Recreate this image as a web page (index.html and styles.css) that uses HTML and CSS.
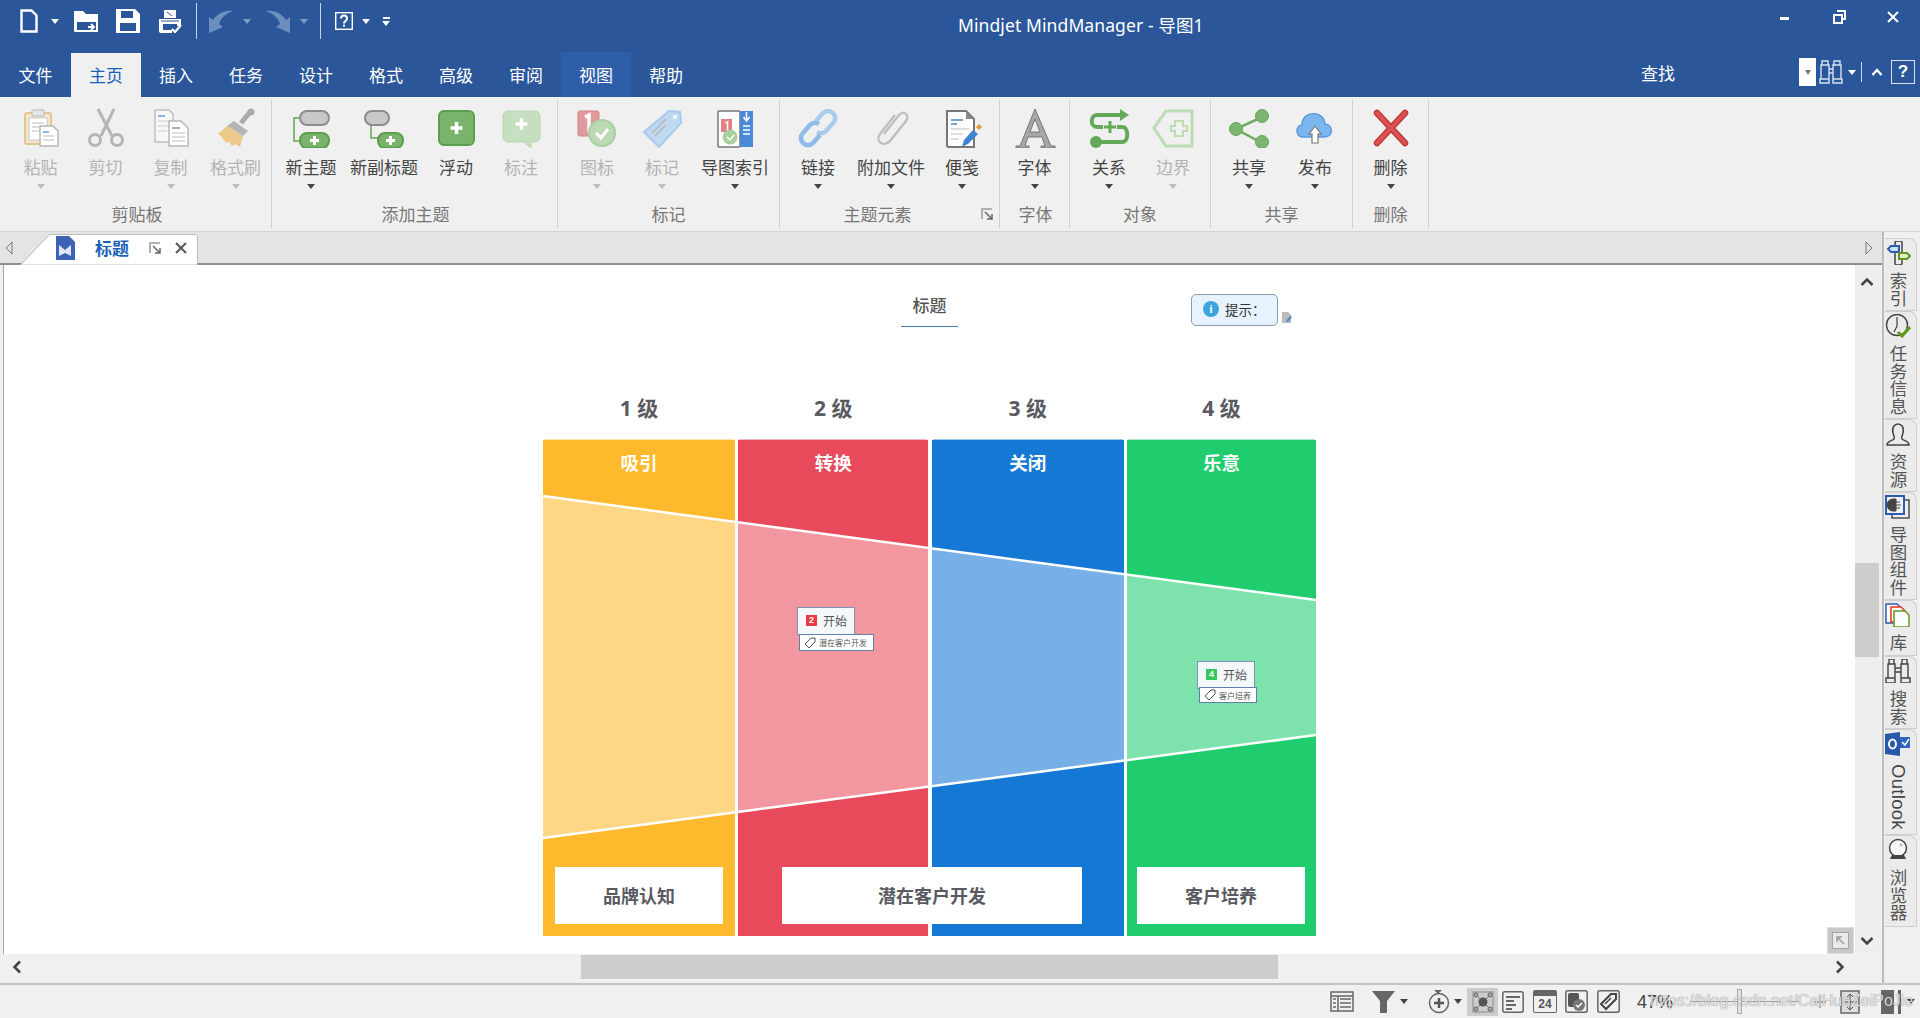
FILE: index.html
```html
<!DOCTYPE html>
<html lang="zh">
<head>
<meta charset="utf-8">
<title>Mindjet MindManager - 导图1</title>
<link rel="stylesheet" href="styles.css">
</head>
<body>
<div class="app">
  <header class="titlebar">
    <div class="qat">
      <svg class="qi w18 m20" viewBox="0 0 18 24"><path d="M1.5 1.5h10l5 5v16h-15z" fill="none" stroke="#fff" stroke-width="2.4"/></svg>
      <i class="caret m13"></i>
      <svg class="qi m15" viewBox="0 0 24 24"><path d="M0 2h9l3 3h12v18H1a1 1 0 0 1-1-1z" fill="#fff"/><path d="M3 13h19v8H3z" fill="#2b579a"/><path d="M14 18h6m-3-3 3 3-3 3" fill="none" stroke="#fff" stroke-width="2"/></svg>
      <svg class="qi m18" viewBox="0 0 24 24"><path d="M0 0h19l5 5v19H0z" fill="#fff"/><path d="M5 2h12v7H5zM4 14h16v8H4z" fill="#2b579a"/></svg>
      <svg class="qi m18" viewBox="0 0 24 24"><path d="M6 1h12v8H6z" fill="#fff"/><path d="M9 3l5 4" stroke="#2b579a"/><path d="M1 10h22v7h-4v-2H5v6h9v3H3a2 2 0 0 1-2-2z" fill="#fff"/><path d="M3 12h18" stroke="#2b579a"/><path d="M14 20l3 3 6-7" fill="none" stroke="#fff" stroke-width="2.2"/></svg>
      <i class="qsep m14"></i>
      <svg class="qi m12" viewBox="0 0 24 24"><path d="M0 24V8l4 3C8 5 15 1 24 2 16 5 12 9 10 15l4 3z" fill="#6c8fbf"/></svg>
      <i class="caret dim m10"></i>
      <svg class="qi m15" viewBox="0 0 24 24"><path d="M24 24V8l-4 3C16 5 9 1 0 2c8 3 12 7 14 13l-4 3z" fill="#6c8fbf"/></svg>
      <i class="caret dim m10"></i>
      <i class="qsep m12"></i>
      <svg class="qi w18 m14" viewBox="0 0 18 18"><rect x=".7" y=".7" width="16.6" height="16.6" fill="none" stroke="#fff" stroke-width="1.4"/><path d="M6 6.5c0-4 6-4 6 0 0 2.500-3 2.500-3 5" fill="none" stroke="#fff" stroke-width="2"/><rect x="8" y="12.600" width="2" height="2" fill="#fff"/></svg>
      <i class="caret m9"></i>
      <span class="customize m12"><i class="dash"></i><i class="caret"></i></span>
    </div>
    <div class="title">Mindjet MindManager - 导图1</div>
    <div class="winctl">
      <span class="wc"><svg width="10" height="10" viewBox="0 0 10 10"><rect y="5" width="9" height="3" fill="#fff"/></svg></span>
      <span class="wc"><svg width="13" height="14" viewBox="0 0 13 14"><path d="M4 1h8v8H9M1 5h8v8H1z" fill="none" stroke="#fff" stroke-width="2"/></svg></span>
      <span class="wc"><svg width="12" height="12" viewBox="0 0 12 12"><path d="M1 1l10 10M11 1 1 11" stroke="#fff" stroke-width="2"/></svg></span>
    </div>
  </header>

  <nav class="menubar">
    <a class="tab">文件</a>
    <a class="tab active">主页</a>
    <a class="tab">插入</a>
    <a class="tab">任务</a>
    <a class="tab">设计</a>
    <a class="tab">格式</a>
    <a class="tab">高级</a>
    <a class="tab">审阅</a>
    <a class="tab hover">视图</a>
    <a class="tab">帮助</a>
    <div class="find">
      <span class="find-label">查找</span>
      <span class="find-box"><i class="caret gray"></i></span>
      <svg width="24" height="24" viewBox="0 0 24 24"><path d="M3 1h6v4H3zM15 1h6v4h-6zM2 5h8v14H2zM14 5h8v14h-8zM10 9h4v4h-4zM1 19h9v4H1zM14 19h9v4h-9z" fill="none" stroke="#d8e2f0" stroke-width="1.400"/></svg>
      <i class="caret m5"></i>
      <i class="find-sep"></i>
      <svg class="m9" width="12" height="10" viewBox="0 0 12 10"><path d="M1.500 8 6 3l4.500 5" fill="none" stroke="#fff" stroke-width="2.400"/></svg>
      <span class="helpbox">?</span>
    </div>
  </nav>

  <section class="ribbon">
    <div class="group g-clip">
      <div class="items">
        <div class="item w65 off"><svg class="ic" viewBox="0 0 44 40"><rect x="6" y="5" width="26" height="31" rx="2" fill="#f3e6d0" stroke="#e2c795" stroke-width="2"/><rect x="13" y="2" width="12" height="6" rx="1" fill="#e6e6e6" stroke="#b8b8b8"/><rect x="10" y="10" width="18" height="22" fill="#fff" stroke="#c9c9c9"/><path d="M13 15h12M13 19h8M13 23h8" stroke="#bbb"/><path d="M21 18h13l5 5v15H21z" fill="#fff" stroke="#b8b8b8" stroke-width="1.500"/><path d="M24 24h6" stroke="#8db4e2" stroke-width="2"/><path d="M24 28h11M24 32h11" stroke="#bbb"/></svg><span class="lb">粘贴</span><i class="caret off"></i></div>
        <div class="item w65 off"><svg class="ic" viewBox="0 0 44 40"><path d="M14 1l14 27M30 1 17 28" stroke="#b5b5b5" stroke-width="3" fill="none"/><circle cx="11" cy="32" r="5.500" fill="none" stroke="#b5b5b5" stroke-width="3"/><circle cx="33" cy="32" r="5.500" fill="none" stroke="#b5b5b5" stroke-width="3"/></svg><span class="lb">剪切</span></div>
        <div class="item w65 off"><svg class="ic" viewBox="0 0 44 40"><path d="M6 2h14l4 4v28H6z" fill="#f7f7f7" stroke="#c0c0c0" stroke-width="1.500"/><path d="M9 8h7" stroke="#8db4e2" stroke-width="2"/><path d="M9 13h12M9 18h12M9 23h9" stroke="#ccc"/><path d="M20 13h12l7 7v18H20z" fill="#fff" stroke="#b8b8b8" stroke-width="1.500"/><path d="M23 20h8" stroke="#8db4e2" stroke-width="2"/><path d="M23 25h13M23 29h13M23 33h13" stroke="#bbb"/></svg><span class="lb">复制</span><i class="caret off"></i></div>
        <div class="item w65 off"><svg class="ic" viewBox="0 0 44 40"><path d="M27 15 36 4" stroke="#aaa" stroke-width="5"/><circle cx="37" cy="4" r="3.500" fill="#aaa"/><path d="M20 13l14 10-5 5-16-10z" fill="#b5b5b5"/><path d="M13 18l16 10-3 11-5-3-3 2-3-4-3 1-5-7-3-2z" fill="#ecc98b"/></svg><span class="lb">格式刷</span><i class="caret off"></i></div>
      </div>
      <div class="glabel">剪贴板</div>
    </div>
    <div class="group g-add">
      <div class="items">
        <div class="item w64"><svg class="ic" viewBox="0 0 44 40"><path d="M11 10H5v23h6" fill="none" stroke="#63a557" stroke-width="1.500"/><rect x="11" y="3" width="29" height="14" rx="7" fill="#c8c8c8" stroke="#8d8d8d" stroke-width="2"/><rect x="11" y="25" width="29" height="15" rx="7" fill="#79b36c" stroke="#5c9f4f" stroke-width="2"/><path d="M25.500 28v9M21 32.500h9" stroke="#fff" stroke-width="3"/></svg><span class="lb">新主题</span><i class="caret"></i></div>
        <div class="item w82"><svg class="ic" viewBox="0 0 44 40"><path d="M9 14v16h7" fill="none" stroke="#63a557" stroke-width="1.500"/><rect x="3" y="3" width="24" height="14" rx="7" fill="#c8c8c8" stroke="#8d8d8d" stroke-width="2"/><rect x="16" y="25" width="25" height="15" rx="7" fill="#79b36c" stroke="#5c9f4f" stroke-width="2"/><path d="M28.500 28v9M24 32.500h9" stroke="#fff" stroke-width="3"/></svg><span class="lb">新副标题</span></div>
        <div class="item w62"><svg class="ic" viewBox="0 0 44 40"><rect x="5" y="3" width="35" height="34" rx="5" fill="#79b36c" stroke="#5c9f4f" stroke-width="2"/><path d="M22.500 14v12M16.500 20h12" stroke="#fff" stroke-width="3.500"/></svg><span class="lb">浮动</span></div>
        <div class="item w68 off"><svg class="ic" viewBox="0 0 44 40"><path d="M9 3h27a5 5 0 0 1 5 5v21a5 5 0 0 1-5 5h-4v6l-7-6H9a5 5 0 0 1-5-5V8a5 5 0 0 1 5-5z" fill="#c6dfc0" stroke="#b7d6b0"/><path d="M22.500 10v12M16.500 16h12" stroke="#fff" stroke-width="3.500"/></svg><span class="lb">标注</span></div>
      </div>
      <div class="glabel">添加主题</div>
    </div>
    <div class="group g-mark">
      <div class="items">
        <div class="item w64 off"><svg class="ic" viewBox="0 0 44 40"><rect x="3" y="3" width="21" height="25" rx="2" fill="#e19a9c" stroke="#d58587"/><path d="M10 9l4-2v17" stroke="#fff" stroke-width="3.500" fill="none"/><circle cx="27" cy="25" r="13" fill="#bcd9b5" stroke="#a9cfa1" stroke-width="2"/><path d="M21 25l5 5 7-9" fill="none" stroke="#fff" stroke-width="3"/></svg><span class="lb">图标</span><i class="caret off"></i></div>
        <div class="item w66 off"><svg class="ic" viewBox="0 0 44 40"><path d="M29 3l11 1 1 11-22 24L4 24z" fill="#c0d9f2" stroke="#a8caec" stroke-width="2"/><circle cx="35" cy="9" r="2" fill="#fff"/><path d="M12 25l14-14M15 28l11-11" stroke="#b7b7b7" stroke-width="1.500"/></svg><span class="lb">标记</span><i class="caret off"></i></div>
        <div class="item w80"><svg class="ic" viewBox="0 0 44 40"><rect x="5" y="3" width="22" height="36" rx="1" fill="#fff" stroke="#777" stroke-width="1.500"/><rect x="27" y="3" width="13" height="36" fill="#4a8ad4"/><rect x="8" y="11" width="11" height="13" fill="#e08082"/><path d="M12.500 15l2-1v8" stroke="#fff" stroke-width="1.600" fill="none"/><circle cx="17" cy="29" r="7.500" fill="#a9cf9f"/><path d="M14 29l3 3 4-5" fill="none" stroke="#fff" stroke-width="1.500"/><path d="M33.500 4v8m-3-3 3 4 3-4M30 18h7M30 22h7M30 26h7" stroke="#fff" stroke-width="1.500" fill="none"/></svg><span class="lb">导图索引</span><i class="caret"></i></div>
      </div>
      <div class="glabel">标记</div>
    </div>
    <div class="group g-elem">
      <div class="items">
        <div class="item w64"><svg class="ic" viewBox="0 0 44 40"><path d="M20 13l7-8a7 7 0 0 1 10 10l-7 8a7 7 0 0 1-9 1" fill="none" stroke="#a9ccee" stroke-width="4.500"/><path d="M24 27l-7 8A7 7 0 0 1 7 25l7-8a7 7 0 0 1 9-1" fill="none" stroke="#8fbbe8" stroke-width="4.500"/></svg><span class="lb">链接</span><i class="caret"></i></div>
        <div class="item w82"><svg class="ic" viewBox="0 0 44 40"><path d="M15 26 30 7c5-5 11 0 7 6L21 33c-7 7-15 0-10-7L26 7" fill="none" stroke="#c0c0c0" stroke-width="2.500"/></svg><span class="lb">附加文件</span><i class="caret"></i></div>
        <div class="item w60"><svg class="ic" viewBox="0 0 44 40"><path d="M7 3h19l8 8v28H9a2 2 0 0 1-2-2z" fill="#fff" stroke="#777" stroke-width="2"/><path d="M26 3v8h8z" fill="#888"/><path d="M11 12h12" stroke="#4a8ad4" stroke-width="1.500"/><path d="M11 16h6" stroke="#4a8ad4" stroke-width="1.500"/><path d="M11 21h18M11 26h12M11 31h8" stroke="#bbb" stroke-width="1.200"/><path d="M22 39l2-7 9-10 5 4-10 10z" fill="#3f83d1"/><path d="M36 19l3-3 3 3-3 3z" fill="#e29a3c"/></svg><span class="lb">便笺</span><i class="caret"></i></div>
      </div>
      <div class="glabel glabel-launch">主题元素<svg class="launch" width="12" height="12" viewBox="0 0 12 12"><path d="M1 11V1h10" fill="none" stroke="#999" stroke-width="1.500"/><path d="M4 4l7 7M11 6v5H6" fill="none" stroke="#666" stroke-width="1.500"/></svg></div>
    </div>
    <div class="group g-font">
      <div class="items">
        <div class="item wfull"><svg class="ic" viewBox="0 0 44 40"><path d="M22 1 38 38h4v2H28v-2h4l-3-9H15l-3 9h4v2H3v-2h4z" fill="#a7a7a7" stroke="#777"/><path d="M22 11l-5 13h10z" fill="#f0f0f0" stroke="#777"/></svg><span class="lb">字体</span><i class="caret"></i></div>
      </div>
      <div class="glabel">字体</div>
    </div>
    <div class="group g-obj">
      <div class="items">
        <div class="item w64"><svg class="ic" viewBox="0 0 44 40"><path d="M34 7H10c-7 0-7 12 0 12h25c7 0 7 15 0 15H10" fill="none" stroke="#66a859" stroke-width="4"/><path d="M33 1l9 6-9 6z" fill="#66a859"/><circle cx="9" cy="34" r="6" fill="#66a859"/><rect x="16" y="11" width="14" height="16" rx="2" fill="#f0f0f0"/><path d="M23 13v12M17 19h12" stroke="#66a859" stroke-width="3"/></svg><span class="lb">关系</span><i class="caret"></i></div>
        <div class="item w64 off"><svg class="ic" viewBox="0 0 44 40"><path d="M15 3h26v35H15L3 20z" fill="#f0f0f0" stroke="#bcdcb4" stroke-width="3"/><path d="M24 14h8v5h4v5h-4v5h-8v-5h-4v-5h4z" transform="translate(0 -1)" fill="none" stroke="#bcdcb4" stroke-width="2"/></svg><span class="lb">边界</span><i class="caret off"></i></div>
      </div>
      <div class="glabel">对象</div>
    </div>
    <div class="group g-share">
      <div class="items">
        <div class="item w66"><svg class="ic" viewBox="0 0 44 40"><path d="M35 9 9 21l26 14" fill="none" stroke="#6dab61" stroke-width="2.500"/><circle cx="35" cy="8" r="6.500" fill="#7cb570" stroke="#66a859"/><circle cx="9" cy="21" r="6.500" fill="#7cb570" stroke="#66a859"/><circle cx="35" cy="34" r="6.500" fill="#7cb570" stroke="#66a859"/></svg><span class="lb">共享</span><i class="caret"></i></div>
        <div class="item w66"><svg class="ic" viewBox="0 0 44 40"><path d="M11 29c-9 0-9-11-2-12C9 2 31 2 32 16c9 1 8 13 0 13z" fill="#7cb6ee" stroke="#5b9bdd" stroke-width="1.500"/><path d="M22 18l6 8h-3v9h-6v-9h-3z" fill="#fff" stroke="#777" stroke-width="1.200"/></svg><span class="lb">发布</span><i class="caret"></i></div>
      </div>
      <div class="glabel">共享</div>
    </div>
    <div class="group g-del">
      <div class="items">
        <div class="item wfull"><svg class="ic" viewBox="0 0 44 40"><path d="M8 5l28 30M36 5 8 35" stroke="#bf3535" stroke-width="6.500" stroke-linecap="round"/><path d="M8 5l28 30M36 5 8 35" stroke="#da5252" stroke-width="4" stroke-linecap="round"/></svg><span class="lb">删除</span><i class="caret"></i></div>
      </div>
      <div class="glabel">删除</div>
    </div>
  </section>

  <div class="workspace">
    <main class="main">
      <div class="docstrip">
        <svg class="strip-arrow" width="8" height="14" viewBox="0 0 8 14"><path d="M7 1 1 7l6 6z" fill="#e4e4e4" stroke="#777"/></svg>
        <div class="doctab">
          <svg class="doctab-bg" width="178" height="31" viewBox="0 0 178 31"><path d="M.5 31 29.500.5h146l2 2V31z" fill="#fff" stroke="#bdbdbd"/></svg>
          <svg class="docicon" width="20" height="24" viewBox="0 0 20 24"><path d="M0 0h13l6 6v18H0z" fill="#3c62b5"/><path d="M3 20V9l6 5 6-5v11l-6-3z" fill="#fff" opacity=".85"/></svg>
          <span class="doctab-name">标题</span>
          <svg class="popout" width="12" height="12" viewBox="0 0 12 12"><path d="M1 11V1h10" fill="none" stroke="#999" stroke-width="1.500"/><path d="M4 4l7 7M11 6v5H6" fill="none" stroke="#666" stroke-width="1.500"/></svg>
          <svg class="tabclose" width="12" height="12" viewBox="0 0 12 12"><path d="M1 1l10 10M11 1 1 11" stroke="#555" stroke-width="2"/></svg>
        </div>
        <svg class="strip-arrow right" width="8" height="14" viewBox="0 0 8 14"><path d="M1 1l6 6-6 6z" fill="#e4e4e4" stroke="#777"/></svg>
      </div>
      <div class="viewport">
        <div class="canvas">
          <div class="root-topic">标题</div>
          <div class="tip"><span class="tip-i">i</span>提示：</div>
          <svg class="tip-note" width="10" height="11" viewBox="0 0 10 11"><path d="M0 0h6l3 3v8H0z" fill="#bbb"/><path d="M4 9l4-5 2 1-4 5z" fill="#4a8ad4"/></svg>

          <div class="funnel">
            <div class="stage s1"><div class="level">1 级</div><div class="col">吸引</div></div>
            <div class="stage s2"><div class="level">2 级</div><div class="col">转换</div></div>
            <div class="stage s3"><div class="level">3 级</div><div class="col">关闭</div></div>
            <div class="stage s4"><div class="level">4 级</div><div class="col">乐意</div></div>
            <svg class="band" width="773" height="496" viewBox="0 0 773 496"><path d="M0 56 773 160V295L0 398z" fill="#fff" fill-opacity=".42"/><path d="M0 56 773 160M0 398 773 295" stroke="#fff" stroke-width="2.500"/></svg>
            <div class="endbox eb1">品牌认知</div>
            <div class="endbox eb2">潜在客户开发</div>
            <div class="endbox eb3">客户培养</div>
            <div class="node n1"><span class="badge red">2</span>开始</div>
            <div class="mtag t1"><svg width="12" height="12" viewBox="0 0 12 12"><path d="M7 1h4v4L5 11 1 7z" fill="none" stroke="#555"/></svg>潜在客户开发</div>
            <div class="node n2"><span class="badge green">4</span>开始</div>
            <div class="mtag t2"><svg width="12" height="12" viewBox="0 0 12 12"><path d="M7 1h4v4L5 11 1 7z" fill="none" stroke="#555"/></svg>客户培养</div>
          </div>

          <div class="fitbtn"><svg width="17" height="17" viewBox="0 0 17 17"><rect x=".5" y=".5" width="16" height="16" fill="#e9e9e9" stroke="#a5a5a5"/><path d="M12 12 5 5M5 10V5h5" fill="none" stroke="#9a9a9a" stroke-width="1.500"/></svg></div>
        </div>
        <div class="vscroll">
          <div class="vs-track"><svg width="14" height="10" viewBox="0 0 14 10"><path d="M1.500 8 7 2.500 12.500 8" fill="none" stroke="#444" stroke-width="2.500"/></svg></div>
          <div class="vs-thumb"></div>
          <div class="vs-track end"><svg width="14" height="10" viewBox="0 0 14 10"><path d="M1.500 2 7 7.500 12.500 2" fill="none" stroke="#444" stroke-width="2.500"/></svg></div>
        </div>
      </div>
      <div class="hscroll">
        <div class="hs-track"><svg width="10" height="14" viewBox="0 0 10 14"><path d="M8 1.500 2.500 7 8 12.500" fill="none" stroke="#444" stroke-width="2.500"/></svg></div>
        <div class="hs-thumb"></div>
        <div class="hs-track end"><svg width="10" height="14" viewBox="0 0 10 14"><path d="M2 1.500 7.500 7 2 12.500" fill="none" stroke="#444" stroke-width="2.500"/></svg></div>
      </div>
    </main>
    <aside class="sidebar">
      <div class="stab h73"><svg class="si" viewBox="0 0 26 24"><rect x="10" y="0" width="7" height="24" rx="2" fill="none" stroke="#444" stroke-width="1.500"/><path d="M3 8l3-3h8v6H6z" fill="#cfe0f2" stroke="#2a5db0" stroke-width="2"/><path d="M14 12h8l3 3-3 3h-8z" fill="#e3f0c8" stroke="#5e9a1e" stroke-width="2"/></svg><span class="vt">索引</span></div>
      <div class="stab h108"><svg class="si" viewBox="0 0 26 24"><circle cx="12" cy="11" r="10.500" fill="none" stroke="#444" stroke-width="1.400"/><path d="M12 3v9l-3 6" fill="none" stroke="#444" stroke-width="1.200"/><path d="M13 18l4 4 8-9" fill="none" stroke="#5e9a1e" stroke-width="3"/></svg><span class="vt">任务信息</span></div>
      <div class="stab h73"><svg class="si" viewBox="0 0 26 24"><path d="M8 11c-3-12 13-12 10 0-1 4-2 4-1 6 2 2 7 2 7 6H2c0-4 5-4 7-6 1-2 0-2-1-6z" fill="none" stroke="#444" stroke-width="1.500"/></svg><span class="vt">资源</span></div>
      <div class="stab h108"><svg class="si" viewBox="0 0 26 24"><rect x="7" y="5" width="17" height="18" fill="#eee" stroke="#444" stroke-width="1.400"/><rect x="1" y="1" width="18" height="18" fill="#f0f0f0" stroke="#2a5db0" stroke-width="2"/><path d="M11 4H8a4 4 0 0 0 0 12h3zM11 7h4M11 10h5M11 13h4" fill="#444" stroke="#444"/></svg><span class="vt">导图组件</span></div>
      <div class="stab h56"><svg class="si" viewBox="0 0 26 24"><path d="M1 1h11l4 4v15H1z" fill="#fff" stroke="#2a5db0" stroke-width="1.500"/><path d="M6 4h10l4 4v11H6z" fill="#fff" stroke="#e8341c" stroke-width="1.500"/><path d="M9 8h11l4 4v12H9z" fill="#fff" stroke="#5e9a1e" stroke-width="1.500"/></svg><span class="vt">库</span></div>
      <div class="stab h73"><svg class="si" viewBox="0 0 26 24"><path d="M4 0h5v5H4zM17 0h5v5h-5zM3 5h7v14H3zM16 5h7v14h-7zM10 9h6v4h-6zM1 19h9v5H1zM16 19h9v5h-9z" fill="none" stroke="#444" stroke-width="1.400"/></svg><span class="vt">搜索</span></div>
      <div class="stab h106"><svg class="si" viewBox="0 0 26 24"><path d="M0 2 15 0v24L0 22z" fill="#2658ad"/><rect x="15" y="5" width="10" height="11" fill="#2f66bd"/><ellipse cx="7.500" cy="12" rx="3.500" ry="4.500" fill="none" stroke="#fff" stroke-width="2"/><path d="M17 10l3 3 4-6" fill="none" stroke="#fff" stroke-width="1.500"/></svg><span class="vt latin">Outlook</span></div>
      <div class="stab h92"><svg class="si" viewBox="0 0 26 24"><circle cx="13" cy="10" r="8.500" fill="#f8f8f8" stroke="#444" stroke-width="1.500"/><circle cx="16" cy="7" r="1.500" fill="#bbb"/><path d="M7 17h12l2 4H5z" fill="#444"/></svg><span class="vt">浏览器</span></div>
    </aside>
  </div>

  <footer class="status">
    <svg class="sti m0" width="24" height="21" viewBox="0 0 24 21"><rect x="1" y="1" width="22" height="19" fill="none" stroke="#666" stroke-width="1.500"/><path d="M1 5h22M8 5v15M3 8h3M3 12h3M3 16h3M10 8h11M10 12h11M10 16h11" stroke="#666" stroke-width="1.500"/></svg>
    <svg class="sti m18" width="23" height="22" viewBox="0 0 23 22"><path d="M0 0h23l-8 10v12H8V10z" fill="#666"/></svg>
    <i class="caret m5"></i>
    <svg class="sti m20" width="22" height="24" viewBox="0 0 22 24"><circle cx="11" cy="13" r="9.500" fill="none" stroke="#666" stroke-width="1.500"/><path d="M6 0h8l-4 4z" fill="#666"/><path d="M11 8v10M6 13h10" stroke="#555" stroke-width="2.500"/></svg>
    <i class="caret m4"></i>
    <span class="st-active m5"><svg width="22" height="22" viewBox="0 0 22 22"><rect x="1" y="1" width="20" height="20" fill="none" stroke="#8a8a8a"/><path d="M4 4l14 14M18 4 4 18" stroke="#777"/><circle cx="11" cy="11" r="4.500" fill="#555"/><circle cx="4" cy="4" r="2" fill="#aaa" stroke="#666"/><circle cx="18" cy="4" r="2" fill="#aaa" stroke="#666"/><circle cx="4" cy="18" r="2" fill="#aaa" stroke="#666"/><circle cx="18" cy="18" r="2" fill="#aaa" stroke="#666"/></svg></span>
    <svg class="sti m4" width="22" height="22" viewBox="0 0 22 22"><rect x=".8" y=".8" width="20.400" height="20.400" rx="2" fill="none" stroke="#666" stroke-width="1.500"/><path d="M4 6h14M4 10h8M4 14h10M4 18h6" stroke="#666" stroke-width="1.800"/></svg>
    <span class="cal m9">24</span>
    <svg class="sti m8" width="23" height="23" viewBox="0 0 23 23"><rect x=".8" y=".8" width="21.400" height="21.400" rx="2" fill="none" stroke="#666" stroke-width="1.500"/><rect x="3" y="3" width="11" height="14" rx="2" fill="#555"/><circle cx="14" cy="15" r="6" fill="#777"/><path d="M11 15l2 2 4-4" fill="none" stroke="#fff" stroke-width="1.500"/></svg>
    <svg class="sti m9" width="23" height="23" viewBox="0 0 23 23"><rect x=".8" y=".8" width="21.400" height="21.400" rx="2" fill="none" stroke="#666" stroke-width="1.500"/><path d="M14 4h5v5L9 19l-5-5z" fill="none" stroke="#444" stroke-width="2"/><path d="M8 14l6-6" stroke="#444" stroke-width="1.500"/></svg>
    <span class="zoom m17">47%</span>
    <span class="slider m18"><i class="thumb"></i></span>
    <svg class="sti m14" width="12" height="12" viewBox="0 0 12 12"><path d="M6 0v12M0 6h12" stroke="#999" stroke-width="1.500"/></svg>
    <svg class="sti m14" width="20" height="24" viewBox="0 0 20 24"><rect x="1" y="1" width="18" height="22" fill="#ddd" stroke="#666" stroke-width="1.500"/><path d="M10 4v16M3 12h14M7 7l3-3 3 3M7 17l3 3 3-3" fill="none" stroke="#555"/></svg>
    <svg class="sti m21" width="20" height="24" viewBox="0 0 20 24"><rect width="20" height="24" fill="#666"/><path d="M13 0v24h4V0z" fill="#eee"/></svg>
    <i class="caret m6"></i>
    <span class="watermark">https://blog.csdn.net/CaiHuaZeiPoJie</span>
  </footer>
</div>
</body>
</html>
```

FILE: styles.css
```css
* { box-sizing: border-box; }
html, body { margin: 0; height: 100%; }
body { font-family: "Noto Sans CJK SC", "Noto Sans", sans-serif; color: #444; background: #f0f0f0; overflow: hidden; }
.app { width: 1920px; height: 1018px; display: flex; flex-direction: column; overflow: hidden; }

.caret { display: inline-block; width: 0; height: 0; flex: none; border-left: 4px solid transparent; border-right: 4px solid transparent; border-top: 5px solid #444; }
.titlebar .caret, .menubar .caret { border-top-color: #fff; }
.titlebar .caret.dim { border-top-color: #7e9cc6; }
.menubar .caret.gray { border-top-color: #777; }

.m0 { margin-left: 1330px; }
.m4 { margin-left: 4px; } .m5 { margin-left: 5px; } .m6 { margin-left: 6px; } .m8 { margin-left: 8px; }
.m9 { margin-left: 9px; } .m10 { margin-left: 10px; } .m12 { margin-left: 12px; } .m13 { margin-left: 13px; }
.m14 { margin-left: 14px; } .m15 { margin-left: 15px; } .m17 { margin-left: 17px; } .m18 { margin-left: 18px; }
.m20 { margin-left: 20px; } .m21 { margin-left: 21px; }

/* title bar */
.titlebar { height: 52px; background: #2b579a; display: flex; align-items: flex-start; color: #fff; flex: none; }
.qat { width: 958px; height: 42px; display: flex; align-items: center; padding-bottom: 0; }
.qi { width: 24px; height: 24px; flex: none; }
.qi.w18 { width: 18px; }
.qi.w18:not(.m20) { height: 18px; }
.qsep { width: 1px; height: 36px; background: #c9d5e8; flex: none; }
.customize { display: flex; flex-direction: column; align-items: center; gap: 2px; width: 8px; }
.dash { width: 7px; height: 2px; background: #fff; }
.title { font-size: 17.500px; line-height: 50px; white-space: nowrap; font-family: "Noto Sans", "Noto Sans CJK SC", sans-serif; letter-spacing: .1px; }
.winctl { margin-left: auto; display: flex; }
.wc { width: 54px; height: 34px; display: flex; align-items: center; justify-content: center; }

/* menu tabs */
.menubar { height: 45px; background: #2b579a; display: flex; flex: none; }
.tab { width: 70px; display: flex; align-items: center; justify-content: center; color: #fff; font-size: 17px; }
.tab:first-child { width: 71px; }
.tab.active { background: #f0f0f0; color: #1a62b8; margin-top: 1px; padding-bottom: 1px; }
.tab.hover { background: #2f5ea9; }
.find { margin-left: auto; display: flex; align-items: center; height: 40px; padding-right: 5px; }
.find-label { font-size: 17px; color: #fff; margin-right: 124px; }
.find-box { width: 17px; height: 28px; background: #fff; margin-right: 3px; display: flex; align-items: center; justify-content: center; }
.find-box .caret { border-left-width: 3.500px; border-right-width: 3.500px; }
.find-sep { width: 1px; height: 20px; background: #c9d5e8; margin-left: 5px; }
.helpbox { width: 24px; height: 24px; margin-left: 8px; border: 1.500px solid #d8e2f0; color: #fff; font: 700 17px/21px "Liberation Sans", sans-serif; text-align: center; }

/* ribbon */
.ribbon { height: 135px; background: #f0f0f0; display: flex; padding: 3px 0; border-bottom: 1px solid #d4d4d4; flex: none; }
.group { height: 128px; display: flex; flex-direction: column; border-right: 1px solid #d2d2d2; padding-top: 8px; }
.g-clip { width: 272px; padding-left: 8px; }
.g-add { width: 286px; padding-left: 7px; }
.g-mark { width: 222px; padding-left: 7px; }
.g-elem { width: 220px; padding-left: 6px; }
.g-font { width: 70px; }
.g-obj { width: 141px; padding-left: 7px; }
.g-share { width: 142px; padding-left: 5px; }
.g-del { width: 76px; }
.items { display: flex; }
.item { display: flex; flex-direction: column; align-items: center; font-size: 17px; color: #444; }
.w60 { width: 60px; } .w62 { width: 62px; } .w64 { width: 64px; } .w65 { width: 65px; } .w66 { width: 66px; } .w68 { width: 68px; }
.w80 { width: 80px; } .w82 { width: 82px; } .wfull { width: 100%; }
.item.off { color: #b4b4b4; }
.ic { width: 44px; height: 40px; flex: none; }
.lb { line-height: 20px; margin-top: 9px; white-space: nowrap; }
.item .caret { margin-top: 7px; }
.caret.off { border-top-color: #bdbdbd; }
.glabel { margin-top: auto; height: 24px; line-height: 20px; font-size: 17px; color: #777; text-align: center; white-space: nowrap; }
.g-clip .glabel { padding-right: 5px; }
.g-add .glabel { padding-right: 5px; }
.g-mark .glabel { padding-right: 7px; }
.g-obj .glabel { padding-right: 7px; }
.g-share .glabel { padding-right: 5px; }
.g-font .glabel { padding-left: 2px; }
.glabel-launch { position: relative; padding-right: 30px; }
.launch { position: absolute; right: 6px; top: 4px; }

/* workspace */
.workspace { flex: 1; display: flex; min-height: 0; }
.main { width: 1884px; display: flex; flex-direction: column; border-right: 2px solid #bcbcbc; }
.docstrip { height: 33px; background: #e4e4e4; border-bottom: 2px solid #8f8f8f; display: flex; align-items: center; flex: none; padding-left: 5px; }
.strip-arrow.right { margin-left: auto; margin-right: 9px; }
.doctab { position: relative; width: 178px; height: 27px; margin: 2px 0 0 7px; align-self: flex-start; display: flex; align-items: center; }
.doctab-bg { position: absolute; left: 0; top: 0; }
.docicon { position: relative; margin-left: 36px; }
.doctab-name { position: relative; margin-left: 19px; font-size: 17px; font-weight: 700; color: #1a62b8; }
.popout { position: relative; margin-left: 20px; }
.tabclose { position: relative; margin-left: 14px; }

.viewport { height: 689px; display: flex; margin-left: 3px; border-left: 1px solid #a8a8a8; flex: none; }
.canvas { position: relative; width: 1851px; background: #fff; }
.vscroll { width: 24px; background: #eee; display: grid; grid-template-rows: 298px 94px 1fr; }
.vs-track { display: flex; justify-content: center; padding-top: 12px; }
.vs-track.end { align-items: flex-end; padding-bottom: 8px; }
.vs-thumb { background: #cdcdcd; }
.hscroll { flex: 1; display: grid; grid-template-columns: 581px 697px 1fr; padding: 1px 0 4px; background: #f0f0f0; }
.hs-track { display: flex; align-items: center; padding-left: 12px; }
.hs-track.end { justify-content: flex-end; padding-right: 37px; }
.hs-thumb { background: #cdcdcd; }

/* map */
.root-topic { position: absolute; left: 897px; top: 28px; width: 57px; height: 34px; border-bottom: 1.500px solid #4a7bb0; font-size: 17px; font-weight: 500; color: #555; text-align: center; line-height: 24px; }
.tip { position: absolute; left: 1187px; top: 29px; width: 87px; height: 32px; background: #e6f2fd; border: 1px solid #8d9bae; border-radius: 5px; display: flex; align-items: center; padding: 0 0 2px 11px; font-size: 13.500px; color: #333; }
.tip-i { width: 16px; height: 16px; border-radius: 50%; background: #3da5de; color: #fff; font: 700 11px/16px "Liberation Sans", sans-serif; text-align: center; margin-right: 6px; }
.tip-note { position: absolute; left: 1278px; top: 47px; }
.funnel { position: absolute; left: 539px; top: 130px; width: 773px; height: 541px; display: flex; justify-content: space-between; }
.stage { display: flex; flex-direction: column; }
.s1 { width: 192px; } .s2 { width: 190px; } .s3 { width: 192px; } .s4 { width: 189px; }
.level { height: 45px; font: 700 21px/27px "Open Sans", "Noto Sans CJK SC", sans-serif; color: #5a5a62; text-align: center; }
.col { height: 496px; color: #fff; font-size: 18.500px; font-weight: 700; text-align: center; line-height: 44px; }
.s1 .col { background: #ffb92c; box-shadow: 0 -2px 0 -1px #ffe3a8; }
.s2 .col { background: #e84a5b; box-shadow: 0 -2px 0 -1px #f6b4bb; }
.s3 .col { background: #1578d4; box-shadow: 0 -2px 0 -1px #9cc8ee; }
.s4 .col { background: #20cd6e; box-shadow: 0 -2px 0 -1px #a4eac4; }
.band { position: absolute; left: 0; top: 45px; }
.endbox { position: absolute; top: 472px; height: 57px; background: #fff; font-size: 18px; font-weight: 700; color: #5a5a62; display: flex; align-items: center; justify-content: center; padding-bottom: 2px; }
.eb1 { left: 12px; width: 168px; }
.eb2 { left: 239px; width: 300px; }
.eb3 { left: 594px; width: 168px; }
.node { position: absolute; width: 58px; height: 28px; background: #f5f8fb; border: 1.500px solid #7b95b5; display: flex; align-items: center; font-size: 12px; color: #555; padding: 0 0 1px 8px; }
.n1 { left: 254px; top: 212px; }
.n2 { left: 654px; top: 266px; }
.badge { width: 11px; height: 11px; margin-right: 6px; color: #fff; font: 700 9px/11px "Liberation Sans", sans-serif; text-align: center; }
.badge.red { background: #ee3a44; }
.badge.green { background: #34c95a; }
.mtag { position: absolute; height: 17px; background: #fff; border: 1px solid #5f80a8; display: flex; align-items: center; padding-left: 4px; gap: 3px; font-size: 8px; color: #555; white-space: nowrap; }
.t1 { left: 256px; top: 239px; width: 75px; }
.t2 { left: 656px; top: 292px; width: 58px; height: 16px; }
.fitbtn { position: absolute; right: 1px; bottom: 0; width: 27px; height: 27px; background: #c8c8c8; border: 1px solid #ddd; display: flex; align-items: center; justify-content: center; }

/* sidebar */
.sidebar { flex: 1; padding: 6px 3px 0 1px; background: #f0f0f0; }
.stab { background: #ebebeb; border: 1px solid #cfcfcf; border-left: 0; border-top-right-radius: 8px; display: flex; flex-direction: column; align-items: center; padding: 2px 5px 0 0; }
.h56 { height: 56px; } .h73 { height: 73px; } .h92 { height: 92px; } .h106 { height: 106px; } .h108 { height: 108px; }
.si { width: 26px; height: 24px; flex: none; }
.vt { writing-mode: vertical-rl; font-size: 17.500px; line-height: 18px; margin-top: 7px; color: #555; }
.vt.latin { font-family: "Liberation Sans", sans-serif; font-size: 18.500px; letter-spacing: .3px; margin-top: 8px; color: #444; }

/* status bar */
.status { position: relative; height: 35px; flex: none; background: #f0f0f0; border-top: 2px solid #c4c4c4; display: flex; align-items: center; }
.sti { flex: none; }
.st-active { width: 31px; height: 28px; background: #ccc; display: flex; align-items: center; justify-content: center; }
.cal { width: 24px; height: 23px; border: 1.500px solid #666; border-top: 6px solid #666; border-radius: 2px; font: 700 12px/16px "Liberation Sans", sans-serif; color: #555; text-align: center; }
.zoom { width: 35px; font: 18px/20px "Liberation Sans", sans-serif; color: #444; white-space: nowrap; }
.slider { position: relative; width: 110px; height: 1px; background: #999; }
.thumb { position: absolute; left: 47px; top: -12px; width: 5px; height: 25px; background: #e2e2e2; border: 1px solid #aaa; }
.watermark { position: absolute; left: 1650px; top: 4px; font: 16px/24px "Liberation Sans", sans-serif; color: rgba(255, 255, 255, .78); text-shadow: 0 0 1px rgba(70, 70, 70, .8); white-space: nowrap; }
```
